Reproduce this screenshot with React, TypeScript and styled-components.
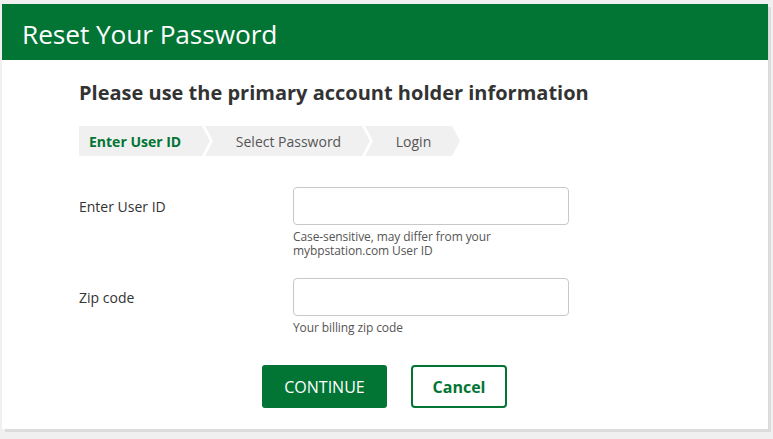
import React from "react";
import styled, { createGlobalStyle } from "styled-components";

const Global = createGlobalStyle`
  html, body { margin: 0; padding: 0; background: #f0f0f0; }
  body { font-family: "Open Sans", "Liberation Sans", sans-serif; }
  * { box-sizing: border-box; }
`;

const Page = styled.div`
  padding: 4px 5px 0 2px;
  width: 773px;
  height: 439px;
`;

const Card = styled.div`
  background: #fff;
  width: 766px;
  height: 425px;
  box-shadow: 3px 3px 0 #dcdcdc;
  display: flex;
  flex-direction: column;
`;

const Header = styled.div`
  background: #027535;
  height: 56px;
  display: flex;
  align-items: center;
  padding: 3px 0 0 20px;
`;

const Title = styled.h1`
  margin: 0;
  color: #fff;
  font-weight: 400;
  font-size: 26.3px;
  letter-spacing: -0.1px;
`;

const Body = styled.div`
  padding: 20px 0 0 77px;
  display: flex;
  flex-direction: column;
`;

const Heading = styled.h2`
  margin: 0;
  font-size: 20px;
  font-weight: 700;
  color: #333;
  line-height: 26px;
`;

const Steps = styled.div`
  margin-top: 20px;
  display: flex;
  height: 30px;
`;

const Step = styled.div<{ $active?: boolean; $w: number; $first?: boolean }>`
  width: ${(p) => p.$w}px;
  height: 30px;
  background: #f0f0f0;
  display: flex;
  align-items: center;
  justify-content: ${(p) => (p.$first ? "flex-start" : "center")};
  padding-left: ${(p) => (p.$first ? "10px" : "2px")};
  font-size: 14px;
  font-weight: ${(p) => (p.$active ? 700 : 400)};
  color: ${(p) => (p.$active ? "#027535" : "#555")};
  clip-path: ${(p) =>
    p.$first
      ? "polygon(0 0, calc(100% - 8px) 0, 100% 50%, calc(100% - 8px) 100%, 0 100%)"
      : "polygon(0 0, calc(100% - 8px) 0, 100% 50%, calc(100% - 8px) 100%, 0 100%, 8px 50%)"};
  margin-right: -5px;
`;

const Form = styled.div`
  margin-top: 31px;
  display: grid;
  grid-template-columns: 214px 276px;
  row-gap: 20px;
`;

const Label = styled.div`
  font-size: 14px;
  color: #333;
  padding-top: 10px;
`;

const Field = styled.div`
  display: flex;
  flex-direction: column;
`;

const Input = styled.input`
  width: 276px;
  height: 38px;
  border: 1px solid #c8c8c8;
  border-radius: 4px;
  outline: none;
`;

const HelpBlock = styled.div`
  margin-top: 5px;
  display: flex;
  flex-direction: column;
  gap: 0;
`;

const HelpLine = styled.span`
  font-size: 12px;
  line-height: 14px;
  height: 14px;
  color: #555;
  letter-spacing: -0.1px;
  white-space: nowrap;
  overflow: visible;
`;

const Buttons = styled.div`
  margin-top: 30px;
  display: flex;
  gap: 24px;
  padding-left: 183px;
`;

const Primary = styled.button`
  width: 125px;
  height: 43px;
  background: #027535;
  color: #fff;
  border: none;
  border-radius: 3px;
  font-family: inherit;
  font-size: 16px;
  cursor: pointer;
`;

const Secondary = styled.button`
  width: 96px;
  height: 43px;
  background: #fff;
  color: #027535;
  border: 2px solid #027535;
  border-radius: 4px;
  font-family: inherit;
  font-size: 16px;
  font-weight: 700;
  cursor: pointer;
`;

export default function App() {
  return (
    <Page>
      <Global />
      <Card>
        <Header>
          <Title>Reset Your Password</Title>
        </Header>
        <Body>
          <Heading>Please use the primary account holder information</Heading>
          <Steps>
            <Step $active $first $w={131}>Enter User ID</Step>
            <Step $w={165}>Select Password</Step>
            <Step $w={95}>Login</Step>
          </Steps>
          <Form>
            <Label>Enter User ID</Label>
            <Field>
              <Input />
              <HelpBlock>
                <HelpLine>Case-sensitive, may differ from your</HelpLine>
                <HelpLine>mybpstation.com User ID</HelpLine>
              </HelpBlock>
            </Field>
            <Label>Zip code</Label>
            <Field>
              <Input />
              <HelpBlock>
                <HelpLine>Your billing zip code</HelpLine>
              </HelpBlock>
            </Field>
          </Form>
          <Buttons>
            <Primary>CONTINUE</Primary>
            <Secondary>Cancel</Secondary>
          </Buttons>
        </Body>
      </Card>
    </Page>
  );
}
